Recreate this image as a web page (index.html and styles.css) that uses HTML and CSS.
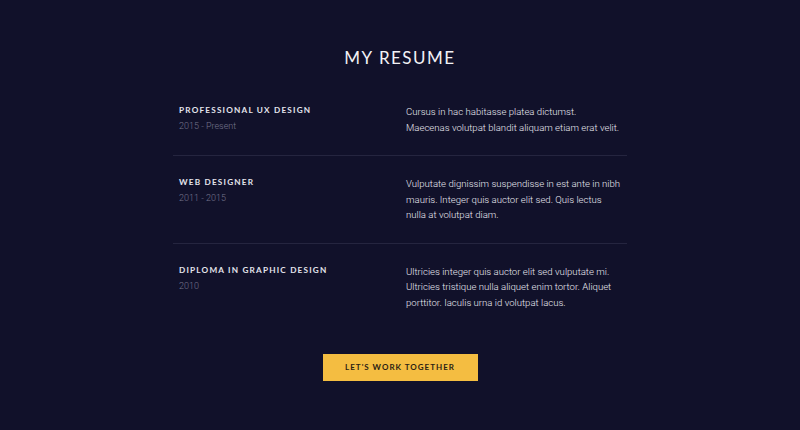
FILE: index.html
```html
<!DOCTYPE html>
<html lang="en">
<head>
<meta charset="utf-8">
<title>My Resume</title>
<link rel="stylesheet" href="styles.css">
</head>
<body>
<section class="resume">
  <h1 class="resume-title">MY RESUME</h1>
  <div class="resume-list">
    <div class="resume-row">
      <div class="resume-head">
        <h2 class="resume-role">PROFESSIONAL UX DESIGN</h2>
        <p class="resume-date">2015 - Present</p>
      </div>
      <p class="resume-text">Cursus in hac habitasse platea dictumst. Maecenas volutpat blandit aliquam etiam erat velit.</p>
    </div>
    <div class="resume-row">
      <div class="resume-head">
        <h2 class="resume-role">WEB DESIGNER</h2>
        <p class="resume-date">2011 - 2015</p>
      </div>
      <p class="resume-text">Vulputate dignissim suspendisse in est ante in nibh mauris. Integer quis auctor elit sed. Quis lectus nulla at volutpat diam.</p>
    </div>
    <div class="resume-row">
      <div class="resume-head">
        <h2 class="resume-role">DIPLOMA IN GRAPHIC DESIGN</h2>
        <p class="resume-date">2010</p>
      </div>
      <p class="resume-text">Ultricies integer quis auctor elit sed vulputate mi. Ultricies tristique nulla aliquet enim tortor. Aliquet porttitor. Iaculis urna id volutpat lacus.</p>
    </div>
  </div>
  <div class="resume-cta">
    <a class="btn" href="#">LET'S WORK TOGETHER</a>
  </div>
</section>
</body>
</html>
```
FILE: styles.css
```css
html, body {
  margin: 0;
  padding: 0;
  background: #11112a;
  height: 100%;
}
body {
  font-family: Roboto, "Liberation Sans", sans-serif;
  color: #d9d9e2;
}
.resume {
  width: 454px;
  margin: 0 auto;
  padding-top: 46px;
}
.resume-title {
  margin: 0 0 34px;
  text-align: center;
  font-family: Lato, "Noto Sans", sans-serif;
  font-weight: 400;
  font-size: 17px;
  letter-spacing: 1.5px;
  line-height: 24px;
  color: #f2f2f6;
}
.resume-list {
  display: flex;
  flex-direction: column;
}
.resume-row {
  display: grid;
  grid-template-columns: 227px 227px;
  padding: 20px 0;
  border-bottom: 1px solid #25253f;
}
.resume-row:first-child {
  padding-top: 0;
}
.resume-row:last-child {
  border-bottom: none;
}
.resume-head {
  padding: 0 6px;
}
.resume-role {
  margin: 0;
  font-family: Lato, "Noto Sans", sans-serif;
  font-weight: 700;
  font-size: 8.2px;
  letter-spacing: 1.2px;
  line-height: 12px;
  color: #e4e4ec;
}
.resume-date {
  margin: 4px 0 0;
  font-size: 9px;
  font-weight: 300;
  line-height: 12px;
  color: #74748c;
}
.resume-text {
  margin: 0;
  padding: 0 6px;
  font-size: 9.6px;
  font-weight: 300;
  line-height: 15.5px;
  color: #e8e8f0;
}
.resume-cta {
  display: flex;
  justify-content: center;
  padding-top: 24px;
}
.btn {
  display: block;
  width: 155px;
  height: 27px;
  line-height: 27px;
  text-align: center;
  background: #f4bd41;
  color: #2b2214;
  text-decoration: none;
  font-family: Lato, "Noto Sans", sans-serif;
  font-size: 8px;
  font-weight: 700;
  letter-spacing: 1px;
}
```
